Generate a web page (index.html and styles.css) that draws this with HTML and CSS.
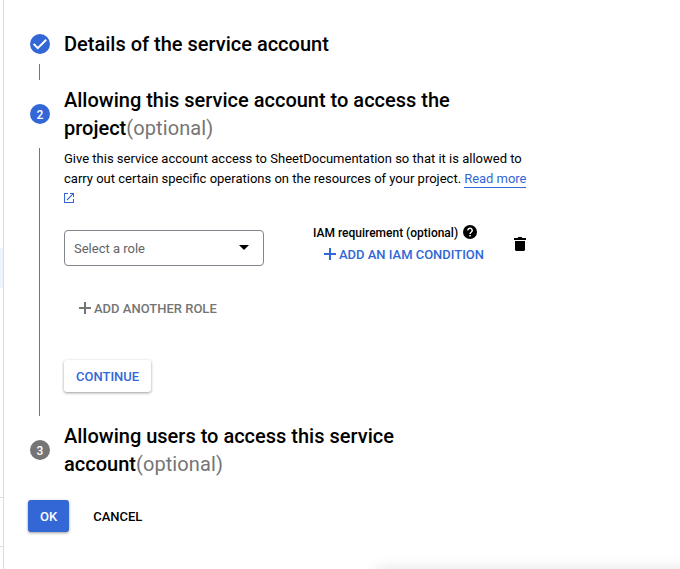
FILE: index.html
```html
<!DOCTYPE html>
<html lang="en">
<head>
<meta charset="utf-8">
<title>Create service account</title>
<link rel="stylesheet" href="styles.css">
</head>
<body>
<aside class="sidebar"><div class="active"></div><div class="section"></div></aside>
<main class="main">
  <section class="step-head">
    <span class="badge"><svg width="20" height="20" viewBox="0 0 20 20"><path d="M3.6 9.900 7.800 14.100 16.200 5.700" fill="none" stroke="#fff" stroke-width="2"/></svg></span>
    <h2>Details of the service account</h2>
  </section>
  <div class="connector"></div>
  <section class="step-head">
    <span class="badge">2</span>
    <h2>Allowing this service account to access the project<span class="optional">(optional)</span></h2>
  </section>
  <div class="step-body">
    <p class="desc">Give this service account access to SheetDocumentation so that it is allowed to carry out certain specific operations on the resources of your project. <a class="link">Read more</a> <svg class="external" width="10" height="10" viewBox="0 0 10 10"><path d="M4 .5H.5v9h9V6M6 .5h3.500V4M9.300.7 3 7" fill="none" stroke="#3367d6" stroke-width="1.1"/></svg></p>
    <div class="role-row">
      <div class="select"><span>Select a role</span><svg width="10" height="5" viewBox="0 0 10 5"><path d="M0 0h10L5 5z"/></svg></div>
      <div class="iam">
        <div class="iam-label">IAM requirement (optional)<svg width="14" height="14" viewBox="0 0 14 14"><circle cx="7" cy="7" r="7"/><path d="M4.900 5.400a2.150 2.150 0 1 1 3.500 1.600C7.500 7.600 7.100 8 7.100 9" fill="none" stroke="#fff" stroke-width="1.500"/><path d="M6.300 10h1.500v1.500H6.300z" fill="#fff"/></svg></div>
        <div class="add-condition"><svg width="12" height="12" viewBox="0 0 12 12"><path d="M5 0h2v5h5v2H7v5H5V7H0V5h5z" fill="#3367d6"/></svg>ADD AN IAM CONDITION</div>
      </div>
      <svg class="trash" width="12" height="14" viewBox="0 0 12 14"><path d="M0 1h3.500L4.400 0h3.200l.9 1H12v2H0zM1 4h10v8.500c0 .8-.7 1.500-1.500 1.500h-7C1.700 14 1 13.300 1 12.500z"/></svg>
    </div>
    <div class="add-role"><svg width="12" height="12" viewBox="0 0 12 12"><path d="M5 0h2v5h5v2H7v5H5V7H0V5h5z" fill="#757575"/></svg>ADD ANOTHER ROLE</div>
    <button class="btn continue">CONTINUE</button>
  </div>
  <section class="step-head">
    <span class="badge pending">3</span>
    <h2>Allowing users to access this service account<span class="optional">(optional)</span></h2>
  </section>
  <div class="actions"><button class="btn ok">OK</button><button class="btn cancel">CANCEL</button></div>
</main>
<div class="bottom-panel"></div>
</body>
</html>
```
FILE: styles.css
```css
* { box-sizing: border-box; }
body {
  margin: 0;
  height: 569px;
  display: flex;
  position: relative;
  overflow: hidden;
  background: #fff;
  color: #000;
  font: 13px/20px Roboto, sans-serif;
}
svg { display: block; flex: none; }
.sidebar { width: 4px; flex: none; border-right: 1px solid #dadce0; padding-top: 248px; }
.active { height: 40px; background: #eef4fe; }
.section { margin-top: 209px; height: 50px; border: solid #dadce0; border-width: 1px 0; }
.main { width: 526px; padding: 30px 0 0 24px; }
.step-head { display: flex; align-items: center; gap: 14px; padding-left: 2px; }
.step-head h2 { margin: 0; width: 400px; font-size: 20px; line-height: 28px; font-weight: 500; }
.optional { color: #757575; font-weight: 400; letter-spacing: .1px; }
.badge {
  width: 20px;
  height: 20px;
  flex: none;
  border-radius: 50%;
  background: #3367d6;
  color: #fff;
  font-size: 12px;
  line-height: 22px;
  font-weight: 500;
  text-align: center;
}
.pending { background: #757575; }
.connector { width: 1px; height: 16px; margin: 6px 0 6px 11px; background: #757575; }
.step-body { height: 268px; margin: 6px 0 6px 11px; padding: 1px 0 0 24px; border-left: 1px solid #757575; }
.desc { margin: 0; width: 466px; }
.link { color: #3367d6; border-bottom: 1px solid #3367d6; padding-bottom: 1px; letter-spacing: -.05px; }
.external { display: inline-block; }
.role-row { display: flex; margin-top: 21px; height: 36px; }
.select {
  width: 200px;
  flex: none;
  display: flex;
  align-items: center;
  justify-content: space-between;
  padding: 2px 14px 0 9px;
  border: 1px solid #80868b;
  border-radius: 4px;
  color: #5f6368;
}
.select svg { margin-top: -3px; }
.iam { width: 179px; margin: -7px 0 0 49px; flex: none; }
.iam-label { display: flex; align-items: center; gap: 5px; height: 20px; font-size: 12px; font-weight: 500; white-space: nowrap; }
.iam-label svg { margin-top: -2px; }
.add-condition, .add-role { display: flex; align-items: center; gap: 3px; font-weight: 500; white-space: nowrap; }
.add-condition svg, .add-role svg { margin-top: -2px; }
.add-condition { margin: 2px 0 0 11px; color: #3367d6; letter-spacing: -.02px; }
.trash { margin: 7px 0 0 22px; }
.add-role { margin: 33px 0 0 15px; color: #757575; }
.btn {
  height: 32px;
  padding: 2px 12px 0;
  border: 0;
  border-radius: 3px;
  background: #fff;
  color: #000;
  font: 500 13px/30px Roboto, sans-serif;
}
.continue { display: block; width: 87px; margin-top: 41px; color: #3367d6; box-shadow: 0 1px 3px rgba(0,0,0,.4); }
.actions { display: flex; gap: 12px; margin-top: 22px; }
.ok { background: #3367d6; color: #fff; box-shadow: 0 1px 3px rgba(0,0,0,.4); }
.bottom-panel { position: absolute; left: 376px; right: -30px; top: 571px; height: 20px; box-shadow: 0 0 16px rgba(0,0,0,.15); }
```
